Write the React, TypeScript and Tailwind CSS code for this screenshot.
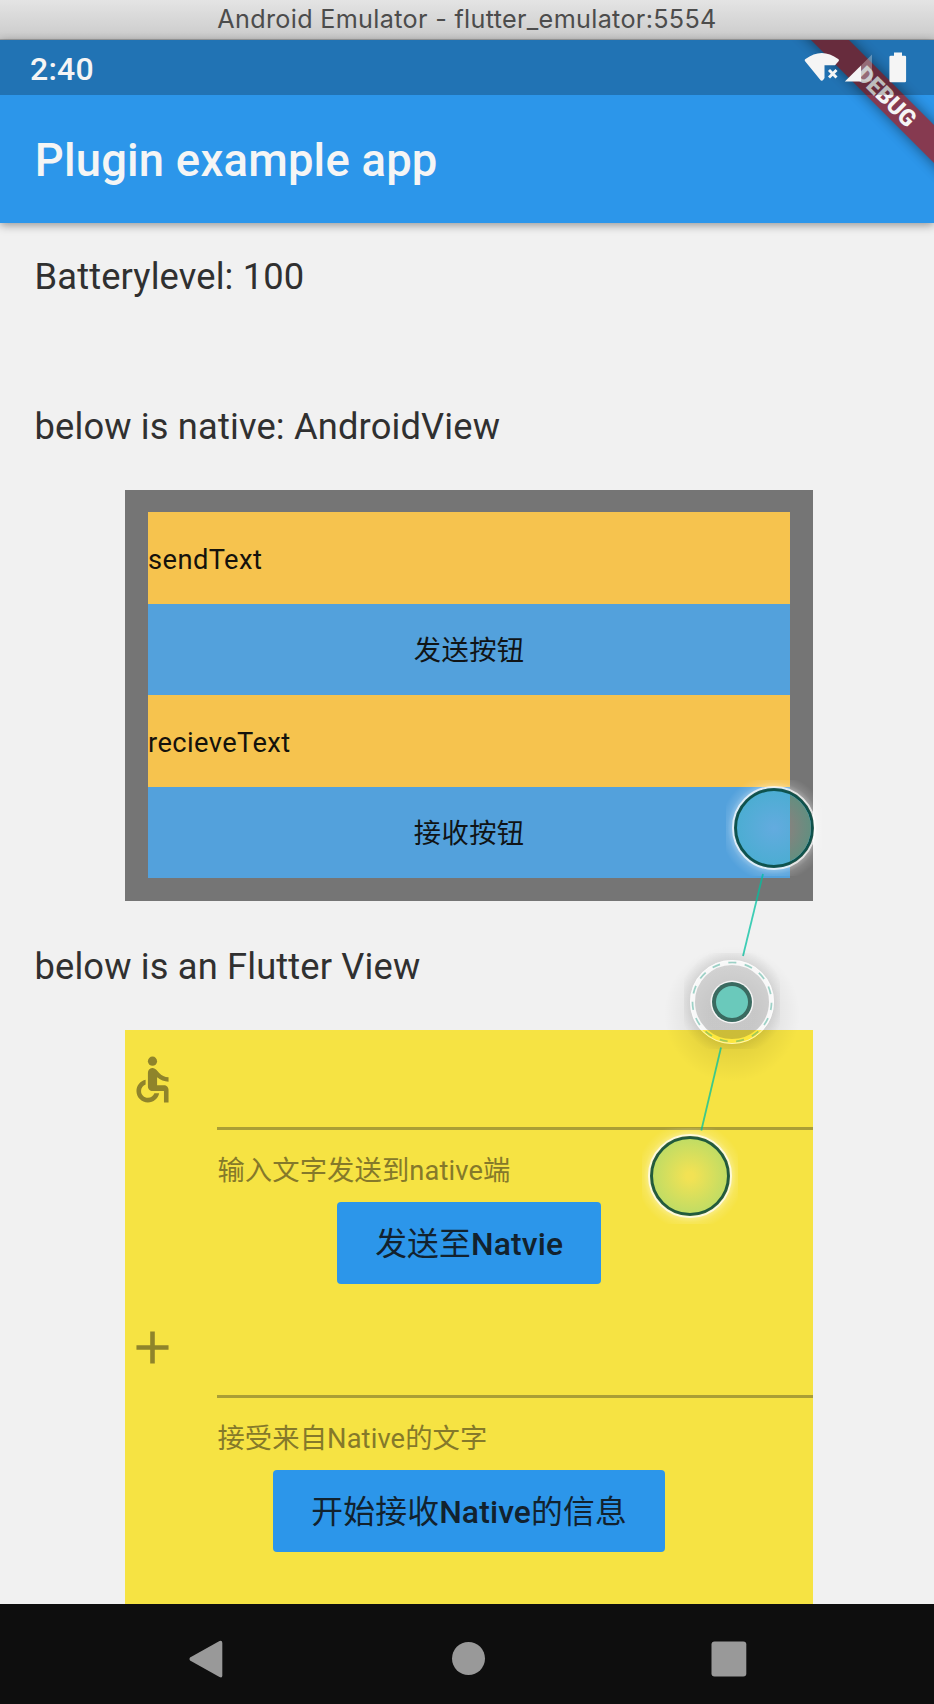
import React from "react";

function TitleBar() {
  return (
    <div className="flex h-10 shrink-0 items-center justify-center border-b border-[#a5a5a5] bg-linear-to-b from-[#e4e4e4] to-[#cbcbcb] pb-[2px]">
      <span className="whitespace-nowrap font-[Inter,'Noto_Sans_CJK_SC',sans-serif] text-[25.2px] leading-9 tracking-[0.32px] text-[#4c4c4c]">
        Android Emulator - flutter_emulator:5554
      </span>
    </div>
  );
}

function DebugBanner() {
  return (
    <svg className="absolute top-0 right-0" width="174" height="183" viewBox="760 40 174 183">
      <defs>
        <filter id="bannerShadow" x="-40%" y="-40%" width="180%" height="180%">
          <feGaussianBlur stdDeviation="7" />
        </filter>
      </defs>
      <path d="M791 20 L829 20 L954 145 L954 183 Z" fill="#000" opacity="0.48" filter="url(#bannerShadow)" />
      <path d="M791 20 L829 20 L954 145 L954 183 Z" fill="#863a50" />
      <text
        x="886"
        y="104.5"
        transform="rotate(45 886 97)"
        textAnchor="middle"
        fill="#f5f5f5"
        className="font-[Roboto,sans-serif] text-[23.2px] font-black"
      >
        DEBUG
      </text>
    </svg>
  );
}

function StatusBar() {
  return (
    <div className="relative z-10 flex h-[55px] items-center justify-between bg-black/23 pr-[27px] pl-[30px]">
      <span className="pt-[2px] text-[32px] leading-none font-medium tracking-[0.2px] text-[#f5f5f5]">2:40</span>
      <svg width="104" height="32" viewBox="803 51.5 104 32" fill="#f5f5f5">
        <path d="M805.3 61 Q804 59.5 805.5 58.5 Q821.7 46.5 838.2 58.5 Q839.6 59.5 838.3 61 L835 64.8 L824.5 64.8 L824.5 77.5 L823.5 79 Q821.7 81.5 820 79 Z" />
        <path d="M829 69.5 L836.5 77 M836.5 69.5 L829 77" stroke="#f5f5f5" strokeWidth="2.9" />
        <path d="M844.8 81 L861 65 V81 Z" />
        <path d="M861 65 L872 54 V81 H861 Z" opacity="0.32" />
        <path d="M894 52 h8 v3.3 h2.8 q1.3 0 1.3 1.3 v23.6 q0 1.5 -1.3 1.5 h-14 q-1.4 0 -1.4 -1.5 v-23.6 q0 -1.3 1.4 -1.3 h3.2 z" />
      </svg>
    </div>
  );
}

interface FieldProps {
  icon: React.ReactNode;
  helper: string;
  before: string;
  word: string;
  after?: string;
}

function Field({ icon, helper, before, word, after }: FieldProps) {
  return (
    <div className="flex h-[268px] flex-col">
      <div className="flex h-[100px] shrink-0">
        <div className="w-[92px] shrink-0 pt-[22px]">{icon}</div>
        <div className="grow border-b-3 border-[#aa9e35]" />
      </div>
      <div className="flex h-[71.5px] shrink-0 items-center pt-[11px] pl-[92px]">
        <span className="whitespace-nowrap text-[27.3px] leading-none tracking-[0.12px] text-[#85792a]">{helper}</span>
      </div>
      <button className="flex h-[82px] shrink-0 items-center justify-center self-center rounded-[4px] bg-[#2c96ea] px-[38px] pt-[5px]">
        <span className="whitespace-nowrap text-[31.8px] leading-none tracking-[0.15px] text-[#12222e]">
          {before}
          <span className="font-medium">{word}</span>
          {after}
        </span>
      </button>
    </div>
  );
}

function NativeView() {
  const rows = [
    { text: "sendText", button: false },
    { text: "发送按钮", button: true },
    { text: "recieveText", button: false },
    { text: "接收按钮", button: true },
  ];
  return (
    <div className="ml-[125.4px] h-[411px] w-[687.5px] shrink-0 bg-[#757575] px-[22.7px] pt-[22.3px]">
      {rows.map((r) => (
        <div
          key={r.text}
          className={
            r.button
              ? "flex h-[91.5px] items-center justify-center bg-[#53a1dc] pt-[5px] text-[27.3px] leading-none tracking-[0.4px] text-[#101416]"
              : "flex h-[91.5px] items-center bg-[#f6c34e] pt-[5px] text-[27.3px] leading-none tracking-[0.4px] text-[#14120c]"
          }
        >
          {r.text}
        </div>
      ))}
    </div>
  );
}

function TouchPoint({ cx, cy, fill, glow }: { cx: number; cy: number; fill: string; glow: string }) {
  return (
    <g>
      <rect x={cx - 48} y={cy - 48} width="96" height="96" fill={glow} />
      <circle cx={cx} cy={cy} r="39" fill={fill} />
      <circle cx={cx} cy={cy} r="41" fill="none" stroke="#fff" strokeOpacity="0.7" strokeWidth="2" />
      <circle cx={cx} cy={cy} r="38.5" fill="none" stroke="#004033" strokeOpacity="0.83" strokeWidth="3" />
    </g>
  );
}

function PinchOverlay() {
  return (
    <svg className="pointer-events-none absolute top-[760px] left-[620px] z-20" width="220" height="480" viewBox="620 760 220 480">
      <defs>
        <radialGradient id="glowTop" gradientUnits="userSpaceOnUse" cx="774" cy="828" r="54">
          <stop offset="0.71" stopColor="#fff" stopOpacity="0" />
          <stop offset="0.72" stopColor="#fff" stopOpacity="0.45" />
          <stop offset="0.86" stopColor="#fff" stopOpacity="0.12" />
          <stop offset="1" stopColor="#fff" stopOpacity="0" />
        </radialGradient>
        <radialGradient id="glowBottom" gradientUnits="userSpaceOnUse" cx="690" cy="1176" r="54">
          <stop offset="0.71" stopColor="#fff" stopOpacity="0" />
          <stop offset="0.72" stopColor="#fff" stopOpacity="0.45" />
          <stop offset="0.86" stopColor="#fff" stopOpacity="0.12" />
          <stop offset="1" stopColor="#fff" stopOpacity="0" />
        </radialGradient>
        <radialGradient id="tealTop">
          <stop offset="0" stopColor="#63abdf" />
          <stop offset="1" stopColor="#4badd2" />
        </radialGradient>
        <radialGradient id="greyTop" gradientUnits="userSpaceOnUse" cx="774" cy="828" r="40">
          <stop offset="0.3" stopColor="#88827f" />
          <stop offset="1" stopColor="#5f9080" />
        </radialGradient>
        <radialGradient id="limeBottom">
          <stop offset="0.1" stopColor="#f2e254" />
          <stop offset="1" stopColor="#bedc65" />
        </radialGradient>
        <radialGradient id="centreShadow" gradientUnits="userSpaceOnUse" cx="732" cy="1002" r="54">
          <stop offset="0.3" stopColor="#000" stopOpacity="0.09" />
          <stop offset="0.74" stopColor="#000" stopOpacity="0.09" />
          <stop offset="1" stopColor="#000" stopOpacity="0" />
        </radialGradient>
        <radialGradient id="dropShadow" gradientUnits="userSpaceOnUse" cx="732" cy="1014" r="68">
          <stop offset="0.35" stopColor="#000" stopOpacity="0.09" />
          <stop offset="0.6" stopColor="#000" stopOpacity="0.06" />
          <stop offset="1" stopColor="#000" stopOpacity="0" />
        </radialGradient>
        <clipPath id="greySide">
          <rect x="790" y="780" width="30" height="96" />
        </clipPath>
        <clipPath id="onPage">
          <rect x="680" y="950" width="110" height="80" />
        </clipPath>
        <clipPath id="onYellow">
          <rect x="680" y="1030" width="110" height="40" />
        </clipPath>
      </defs>

      <TouchPoint cx={774} cy={828} fill="url(#tealTop)" glow="url(#glowTop)" />
      <circle cx="774" cy="828" r="37" fill="url(#greyTop)" clipPath="url(#greySide)" />
      <TouchPoint cx={690} cy={1176} fill="url(#limeBottom)" glow="url(#glowBottom)" />

      <path d="M763 874 L743 956" stroke="#00c0a0" strokeOpacity="0.75" strokeWidth="1.8" />

      <circle cx="732" cy="1014" r="68" fill="url(#dropShadow)" />
      <rect x="684" y="953" width="96" height="96" fill="url(#centreShadow)" />
      <path d="M721 1047.5 L701.3 1130.5" stroke="#00c0a0" strokeOpacity="0.75" strokeWidth="1.8" />
      <circle cx="732" cy="1002" r="39.5" fill="none" stroke="#f8f8f8" strokeWidth="5" clipPath="url(#onPage)" />
      <circle cx="732" cy="1002" r="39.5" fill="none" stroke="#fde83e" strokeWidth="5" clipPath="url(#onYellow)" />
      <circle cx="732" cy="1002" r="41.5" fill="none" stroke="#fff" strokeOpacity="0.6" strokeWidth="1" />
      <circle cx="732" cy="1002" r="39.5" fill="none" stroke="#1c9c80" strokeOpacity="0.42" strokeWidth="1.7" strokeDasharray="8 8.55" strokeDashoffset="4" transform="rotate(6 732 1002)" />
      <circle cx="732" cy="1002" r="21.5" fill="#f4f4f4" />
      <circle cx="732" cy="1002" r="20" fill="#3a6a60" />
      <circle cx="732" cy="1002" r="16" fill="#6ac9bb" />
    </svg>
  );
}

export default function App() {
  return (
    <div className="relative flex h-[1704px] w-[934px] flex-col overflow-hidden bg-[#f1f1f1] font-[Roboto,'Noto_Sans_CJK_SC',sans-serif]">
      <TitleBar />
      <header className="relative z-10 h-[183px] shrink-0 bg-[#2c96ea] shadow-[0_2px_9px_rgba(0,0,0,0.4)]">
        <DebugBanner />
        <StatusBar />
        <h1 className="flex h-[128px] items-center pt-[4px] pl-[34.7px] text-[45.4px] leading-none font-medium tracking-[0.22px] text-[#f5f5f5]">
          Plugin example app
        </h1>
      </header>
      <main className="flex min-h-0 grow flex-col overflow-hidden text-[#303030]">
        <p className="mt-[33px] shrink-0 pl-[34.5px] text-[36.3px] leading-[42px] tracking-[0.14px]">Batterylevel: 100</p>
        <p className="mt-[108px] mb-[42px] shrink-0 pl-[34.5px] text-[36.3px] leading-[42px] tracking-[0.15px]">
          below is native: AndroidView
        </p>
        <NativeView />
        <p className="mt-[45px] mb-[42px] shrink-0 pl-[34.5px] text-[36.3px] leading-[42px] tracking-[0.14px]">
          below is an Flutter View
        </p>
        <section className="ml-[125.4px] h-[600px] w-[687.5px] shrink-0 bg-[#f6e343]">
          <Field
            helper="输入文字发送到native端"
            before="发送至"
            word="Natvie"
            icon={
              <svg width="55" height="55" viewBox="0 0 24 24" fill="#8f842b">
                <circle cx="12" cy="4" r="2" />
                <path d="M19 13v-2c-1.54.02-3.09-.75-4.07-1.83l-1.29-1.43c-.17-.19-.38-.34-.61-.45-.01 0-.01-.01-.02-.01H13c-.35-.2-.75-.3-1.19-.26C10.76 7.11 10 8.04 10 9.09V15c0 1.1.9 2 2 2h5v5h2v-5.5c0-1.1-.9-2-2-2h-3v-3.45c1.29 1.07 3.25 1.94 5 1.95zm-6.17 5c-.41 1.16-1.52 2-2.83 2-1.66 0-3-1.34-3-3 0-1.31.84-2.41 2-2.83V12.1c-2.28.46-4 2.48-4 4.9 0 2.76 2.24 5 5 5 2.42 0 4.44-1.72 4.9-4h-2.07z" />
              </svg>
            }
          />
          <Field
            helper="接受来自Native的文字"
            before="开始接收"
            word="Native"
            after="的信息"
            icon={
              <svg width="55" height="55" viewBox="0 0 24 24" fill="#8f842b">
                <path d="M19 13h-6v6h-2v-6H5v-2h6V5h2v6h6v2z" />
              </svg>
            }
          />
        </section>
      </main>
      <nav className="flex h-[100px] shrink-0 bg-[#0e0e0e]">
        <svg width="934" height="100" viewBox="0 1604 934 100" fill="#999">
          <path d="M190 1657.5 L219.5 1641 Q222.3 1640 222.3 1643 V1675.5 Q222.3 1678.3 219.5 1677 L190 1660.5 Q188.8 1659 190 1657.5 Z" />
          <circle cx="468.5" cy="1658.5" r="16.5" />
          <rect x="711.5" y="1641.5" width="34.8" height="35" rx="3" />
        </svg>
      </nav>
      <PinchOverlay />
    </div>
  );
}
